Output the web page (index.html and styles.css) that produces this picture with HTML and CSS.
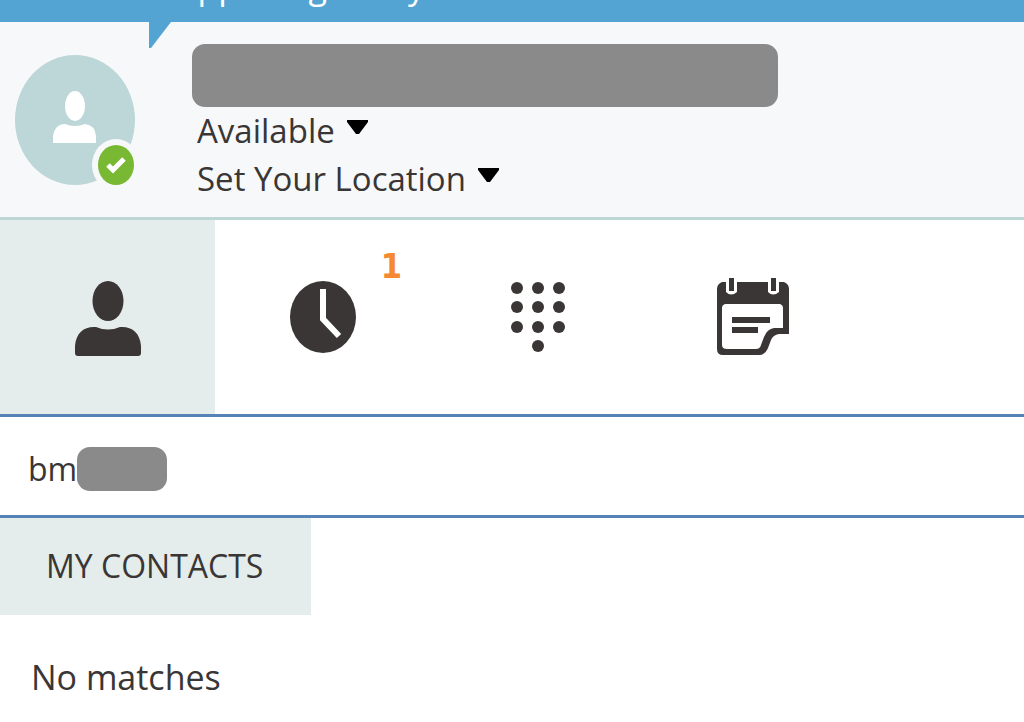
FILE: index.html
```html
<!DOCTYPE html>
<html lang="en">
<head>
    <meta charset="utf-8">
    <meta name="viewport" content="width=device-width, initial-scale=1">
    <title>Contacts</title>
    <link rel="stylesheet" href="styles.css">
</head>
<body>
    <header class="note">
        <p class="note-text">What's happening today?</p>
    </header>

    <section class="profile">
        <svg class="note-tail" viewBox="0 0 22 26" aria-hidden="true"><path d="M0 0H22L2 26H0Z" fill="#54a4d3"/></svg>
        <svg class="avatar" viewBox="0 0 122 132" aria-hidden="true">
            <ellipse cx="60" cy="65" rx="60" ry="65" fill="#bdd6d8"/>
            <ellipse cx="60" cy="51" rx="10" ry="15" fill="#fff"/>
            <path d="M38 88V81Q40 69 50 69Q60 73 70 69Q80 70 81 81V88Z" fill="#fff"/>
            <ellipse cx="101" cy="110" rx="24" ry="26" fill="#f7f8fa"/>
            <ellipse cx="101" cy="110" rx="18" ry="20" fill="#78b833"/>
            <path d="M93 110L98 115L109 104" fill="none" stroke="#fff" stroke-width="5"/>
        </svg>
        <div class="info">
            <div class="mask name-mask"></div>
            <div class="choice">
                <select class="choice-list" aria-label="Status"><option>Available</option></select>
                <svg class="arrow" viewBox="0 0 21 14" aria-hidden="true"><path d="M0 0H21V2L12 14H9L0 2Z"/></svg>
            </div>
            <div class="choice">
                <select class="choice-list" aria-label="Location"><option>Set Your Location</option></select>
                <svg class="arrow" viewBox="0 0 21 14" aria-hidden="true"><path d="M0 0H21V2L12 14H9L0 2Z"/></svg>
            </div>
        </div>
    </section>

    <nav class="tabs">
        <button class="tab active" type="button" aria-label="Contacts">
            <svg class="icon" viewBox="0 0 74 80" aria-hidden="true">
                <ellipse cx="37" cy="23" rx="15.5" ry="20"/>
                <path d="M4 75V68C5 54 14 48 25 49Q37 54 49 49C60 48 69 54 70 68V75Q70 78 67 78H7Q4 78 4 75Z"/>
            </svg>
        </button>
        <button class="tab" type="button" aria-label="Conversations">
            <svg class="icon" viewBox="0 0 74 80" aria-hidden="true">
                <ellipse cx="37" cy="39" rx="33" ry="36"/>
                <path d="M37 11V41L53 58" fill="none" stroke="#fff" stroke-width="6"/>
            </svg>
            <span class="count">1</span>
        </button>
        <button class="tab" type="button" aria-label="Phone">
            <svg class="icon" viewBox="0 0 74 80" aria-hidden="true">
                <circle cx="16" cy="10" r="6"/><circle cx="37" cy="10" r="6"/><circle cx="58" cy="10" r="6"/>
                <circle cx="16" cy="29" r="6"/><circle cx="37" cy="29" r="6"/><circle cx="58" cy="29" r="6"/>
                <circle cx="16" cy="49" r="6"/><circle cx="37" cy="49" r="6"/><circle cx="58" cy="49" r="6"/>
                <circle cx="37" cy="68" r="6"/>
            </svg>
        </button>
        <button class="tab" type="button" aria-label="Meetings">
            <svg class="icon" viewBox="0 0 74 80" aria-hidden="true">
                <path fill-rule="evenodd" d="M6 4H68Q73 6 73 11V56H63Q57 57 55 62L52 70Q49 77 43 77H7Q1 77 1 71V11Q1 6 6 4ZM9 26Q6 27 6 30V67Q6 71 11 71H40Q44 71 45 67L48 59Q51 51 58 50H67V30Q67 27 64 26Z"/>
                <path d="M10 0H21V14Q15 19 10 14ZM52 0H63V14Q57 19 52 14Z" fill="#fff"/>
                <path d="M13 0H18V13H13ZM55 0H60V13H55ZM16 39H54V45H16ZM16 49H42V55H16Z"/>
            </svg>
        </button>
    </nav>

    <div class="search">
        <input class="search-box" type="text" value="bm" aria-label="Find someone">
        <div class="mask search-mask"></div>
    </div>

    <main>
        <button class="group" type="button">MY CONTACTS</button>
        <p class="message">No matches</p>
    </main>
</body>
</html>
```

FILE: styles.css
```css
* {
    box-sizing: border-box;
}
body {
    margin: 0;
    background: #fff;
    color: #3a3635;
    font-family: "Open Sans", "Noto Sans", sans-serif;
    font-size: 34px;
    line-height: 48px;
}
button,
input,
select {
    margin: 0;
    padding: 0;
    border: 0;
    border-radius: 0;
    background: transparent;
    color: inherit;
    font: inherit;
}
p {
    margin: 0;
}

/* blue note strip */
.note {
    display: flex;
    align-items: flex-end;
    height: 22px;
    padding: 0 0 12px 42px;
    overflow: hidden;
    background: #54a4d3;
}
.note-text {
    color: #fff;
    white-space: nowrap;
}
.note-tail {
    position: absolute;
    top: 0;
    left: 149px;
    width: 22px;
    height: 26px;
}

/* own profile */
.profile {
    position: relative;
    display: flex;
    gap: 55px;
    padding: 22px 16px 14px 15px;
    border-bottom: 3px solid #bdd6d6;
    background: #f7f8fa;
}
.avatar {
    flex: none;
    width: 122px;
    height: 132px;
    margin-top: 11px;
}
.info {
    flex: 1;
    min-width: 0;
}
.mask {
    border-radius: 13px;
    background: #8a8a8a;
}
.name-mask {
    max-width: 586px;
    height: 63px;
}
.choice {
    display: flex;
    align-items: center;
    gap: 12px;
    padding-left: 5px;
}
.choice-list {
    appearance: none;
    height: 48px;
    font-size: 33px;
}
.arrow {
    width: 21px;
    height: 14px;
    margin-bottom: 8px;
    pointer-events: none;
}

/* tabs */
.tabs {
    display: grid;
    grid-template-columns: repeat(4, 21%);
    border-bottom: 3px solid #5583b8;
}
.tab {
    position: relative;
    display: flex;
    align-items: center;
    justify-content: center;
    height: 194px;
    padding-top: 2px;
}
.active {
    background: #e4edeb;
}
.icon {
    width: 74px;
    height: 80px;
    fill: #3a3635;
}
.count {
    position: absolute;
    top: 22px;
    right: 28px;
    color: #f58a33;
    font-family: "DejaVu Sans Condensed", "DejaVu Sans", sans-serif;
    font-weight: bold;
}

/* search */
.search {
    position: relative;
    padding: 28px 28px 22px;
    border-bottom: 3px solid #5583b8;
}
.search-box {
    display: block;
    width: 100%;
    height: 48px;
    outline: 0;
    font-size: 32px;
}
.search-mask {
    position: absolute;
    top: 30px;
    left: 77px;
    width: 90px;
    height: 44px;
}

/* results */
.group {
    display: block;
    padding: 24px 48px 25px 46px;
    background: #e4edeb;
    font-size: 32px;
}
.message {
    padding: 38px 31px 20px;
}
```
